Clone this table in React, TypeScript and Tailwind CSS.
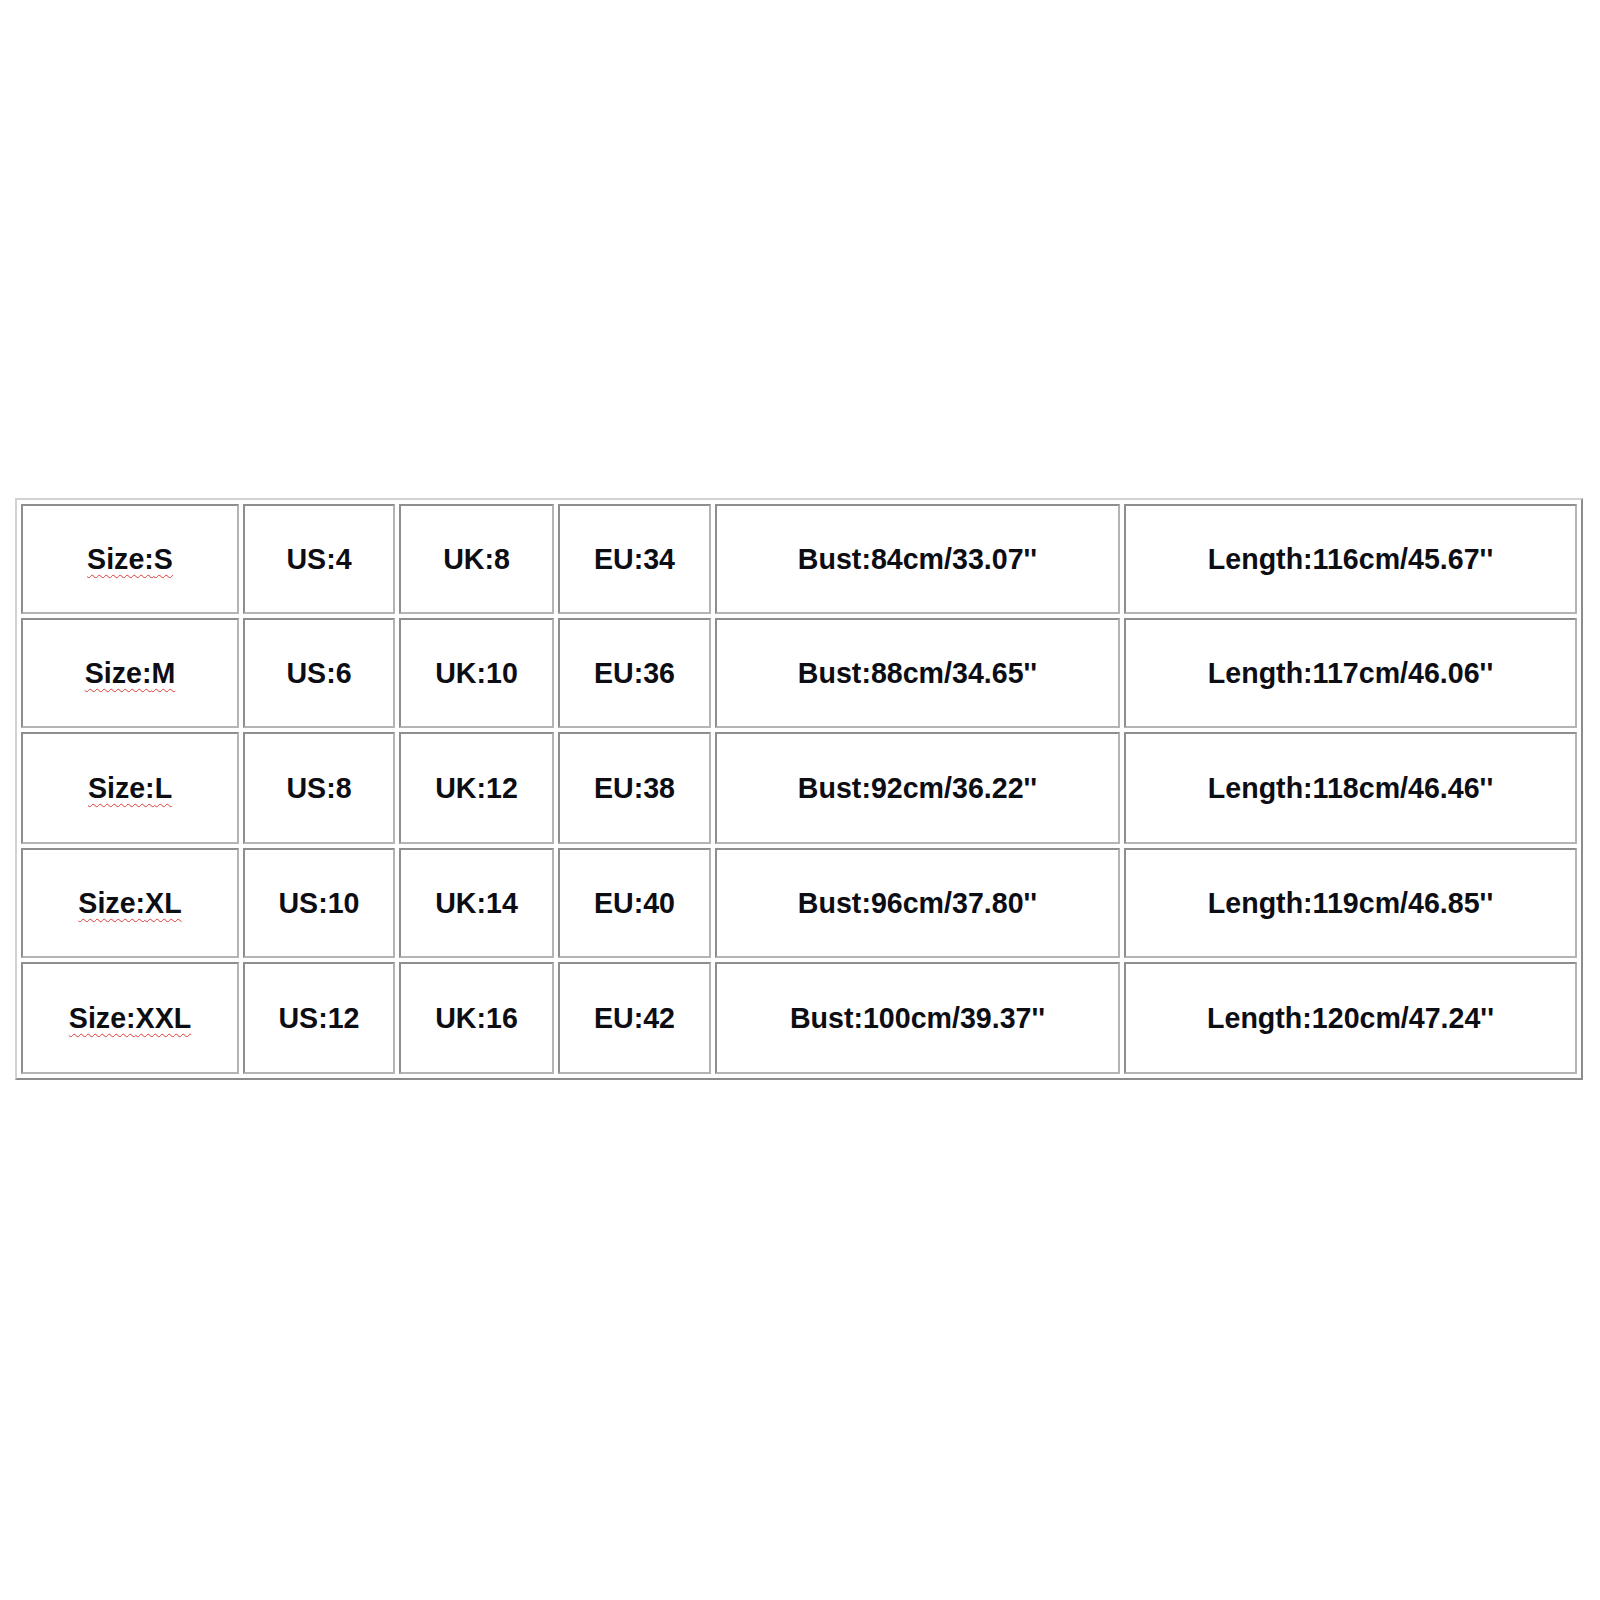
import React from "react";

const rows = [
  ["S", "US:4", "UK:8", "EU:34", "Bust:84cm/33.07''", "Length:116cm/45.67''"],
  ["M", "US:6", "UK:10", "EU:36", "Bust:88cm/34.65''", "Length:117cm/46.06''"],
  ["L", "US:8", "UK:12", "EU:38", "Bust:92cm/36.22''", "Length:118cm/46.46''"],
  ["XL", "US:10", "UK:14", "EU:40", "Bust:96cm/37.80''", "Length:119cm/46.85''"],
  ["XXL", "US:12", "UK:16", "EU:42", "Bust:100cm/39.37''", "Length:120cm/47.24''"],
];

function Cell({ children }: { children: React.ReactNode }) {
  return (
    <div className="flex items-center justify-center border-2 border-t-[#8e8e8e] border-l-[#8e8e8e] border-b-[#b4b4b4] border-r-[#b4b4b4] bg-white">
      {children}
    </div>
  );
}

export default function App() {
  return (
    <div className="w-[1600px] h-[1600px] bg-white pt-[498px] pl-[15px]" style={{ fontFamily: '"Liberation Sans", Arial, sans-serif' }}>
      <div className="w-[1568px] border-2 border-t-[#d2d2d2] border-l-[#d2d2d2] border-b-[#8c8c8c] border-r-[#8c8c8c] p-1 grid grid-cols-[218px_152px_155px_153px_405px_453px] grid-rows-[110px_110px_112px_110px_112px] gap-1 text-[28.6px] font-bold text-[#0d0d14]">
        {rows.map((r, i) => (
          <React.Fragment key={i}>
            <Cell>
              <span className="underline decoration-wavy decoration-[#e03a3a] decoration-1 underline-offset-[5px]">
                Size:{r[0]}
              </span>
            </Cell>
            {r.slice(1).map((t, j) => (
              <Cell key={j}>
                <span>{t}</span>
              </Cell>
            ))}
          </React.Fragment>
        ))}
      </div>
    </div>
  );
}
